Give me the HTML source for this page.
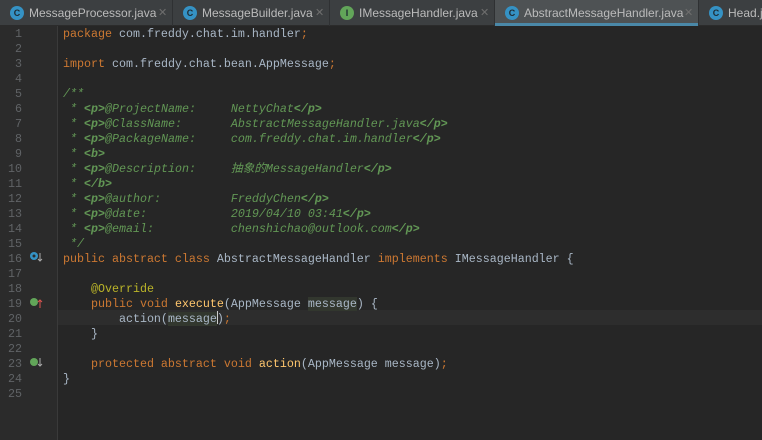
<!DOCTYPE html>
<html><head><meta charset="utf-8"><style>
*{margin:0;padding:0;box-sizing:border-box}
body{width:762px;height:440px;overflow:hidden;background:#262626;font-family:"Liberation Sans","Noto Sans CJK SC",sans-serif;position:relative}
.tabs{position:absolute;left:0;top:0;width:762px;height:26px;background:#3c3f41;border-bottom:1px solid #2b2b2b}
.tab{position:absolute;top:0;height:26px;border-right:1px solid #2f3133;color:#bbbbbb;font-size:12px;line-height:26px;white-space:nowrap;overflow:hidden}
.tab .ic{position:absolute;left:10px;top:6px;width:14px;height:14px;border-radius:7px;background:#3592c4;color:#1e2b33;font-size:9px;line-height:14px;text-align:center;font-weight:bold}
.tab .ic.i{background:#62a559}
.tab .nm{position:absolute;left:29px}
.tab .x{position:absolute;color:#6e6e6e;font-size:11px}
.tab.act{background:#4e5254}
.tab.act:after{content:"";position:absolute;left:0;right:0;bottom:0;height:3px;background:#4a88a8}
.gutter{position:absolute;left:0;top:26px;width:57px;height:414px;background:#2b2b2b}
.fold{position:absolute;left:57px;top:26px;width:1px;height:414px;background:#3a3a3a}
.ln{position:absolute;left:0;width:22px;text-align:right;color:#606366;font:11.67px/15px "Liberation Mono",monospace}
.code{position:absolute;left:63px;font:11.67px/15px "Liberation Mono","Noto Sans CJK SC",monospace;color:#a9b7c6;white-space:pre}
.k{color:#cc7832}.c{color:#629755;font-style:italic}.t{color:#629755;font-weight:bold;font-style:italic}.a{color:#bbb529}.f{color:#ffc66d}
.hl{background:#32372e}
.cur{position:absolute;left:0;top:310px;width:762px;height:15px;background:#2d2d2d}
</style></head><body>
<div class="tabs">
<div class="tab" style="left:0;width:173px"><span class="ic">C</span><span class="nm">MessageProcessor.java</span><span class="x" style="left:158px">✕</span></div>
<div class="tab" style="left:173px;width:157px"><span class="ic">C</span><span class="nm">MessageBuilder.java</span><span class="x" style="left:142px">✕</span></div>
<div class="tab" style="left:330px;width:165px"><span class="ic i">I</span><span class="nm">IMessageHandler.java</span><span class="x" style="left:150px">✕</span></div>
<div class="tab act" style="left:495px;width:204px"><span class="ic">C</span><span class="nm">AbstractMessageHandler.java</span><span class="x" style="left:189px">✕</span></div>
<div class="tab" style="left:699px;width:63px;border-right:none"><span class="ic">C</span><span class="nm">Head.java</span></div>
</div>
<div class="cur"></div>
<div class="gutter"></div>
<div class="fold"></div>
<div class="ln" style="top:27px">1<br>2<br>3<br>4<br>5<br>6<br>7<br>8<br>9<br>10<br>11<br>12<br>13<br>14<br>15<br>16<br>17<br>18<br>19<br>20<br>21<br>22<br>23<br>24<br>25</div>
<svg style="position:absolute;left:28px;top:250px" width="20" height="130">
<circle cx="6" cy="6" r="4" fill="#3592c4"/><circle cx="6" cy="6" r="1.5" fill="#2b2b2b"/><path d="M12 3v8M10 9l2 2 2-2" stroke="#aaa" fill="none"/>
<circle cx="6" cy="52" r="4" fill="#62a559"/><path d="M12 58v-8M10 52l2-2 2 2" stroke="#d9534f" fill="none"/>
<circle cx="6" cy="112" r="4" fill="#62a559"/><path d="M12 108v8M10 114l2 2 2-2" stroke="#aaa" fill="none"/>
</svg>
<div class="code" style="top:27px"><span class="k">package</span> com.freddy.chat.im.handler<span class="k">;</span>

<span class="k">import</span> com.freddy.chat.bean.AppMessage<span class="k">;</span>

<span class="c">/**</span>
<span class="c"> * </span><span class="t">&lt;p&gt;</span><span class="c">@ProjectName:     NettyChat</span><span class="t">&lt;/p&gt;</span>
<span class="c"> * </span><span class="t">&lt;p&gt;</span><span class="c">@ClassName:       AbstractMessageHandler.java</span><span class="t">&lt;/p&gt;</span>
<span class="c"> * </span><span class="t">&lt;p&gt;</span><span class="c">@PackageName:     com.freddy.chat.im.handler</span><span class="t">&lt;/p&gt;</span>
<span class="c"> * </span><span class="t">&lt;b&gt;</span>
<span class="c"> * </span><span class="t">&lt;p&gt;</span><span class="c">@Description:     抽象的MessageHandler</span><span class="t">&lt;/p&gt;</span>
<span class="c"> * </span><span class="t">&lt;/b&gt;</span>
<span class="c"> * </span><span class="t">&lt;p&gt;</span><span class="c">@author:          FreddyChen</span><span class="t">&lt;/p&gt;</span>
<span class="c"> * </span><span class="t">&lt;p&gt;</span><span class="c">@date:            2019/04/10 03:41</span><span class="t">&lt;/p&gt;</span>
<span class="c"> * </span><span class="t">&lt;p&gt;</span><span class="c">@email:           chenshichao@outlook.com</span><span class="t">&lt;/p&gt;</span>
<span class="c"> */</span>
<span class="k">public abstract class</span> AbstractMessageHandler <span class="k">implements</span> IMessageHandler {

    <span class="a">@Override</span>
    <span class="k">public void</span> <span class="f">execute</span>(AppMessage <span class="hl">message</span>) {
        action(<span class="hl">message</span>)<span class="k">;</span>
    }

    <span class="k">protected abstract void</span> <span class="f">action</span>(AppMessage message)<span class="k">;</span>
}
</div>
<div style="position:absolute;left:217px;top:311px;width:1px;height:13px;background:#ccc"></div>
</body></html>
